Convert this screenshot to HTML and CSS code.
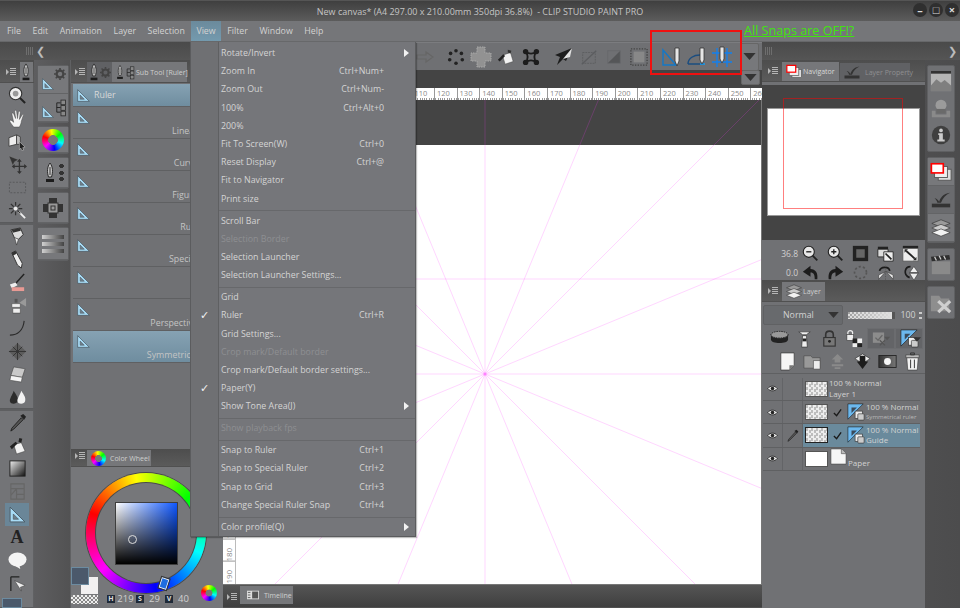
FILE: index.html
```html
<!DOCTYPE html>
<html lang="en">
<head>
    <meta charset="UTF-8">
    <title>New canvas - CLIP STUDIO PAINT PRO</title>
    <link rel="stylesheet" href="styles.css">
</head>
<body>
<svg class="sprite" xmlns="http://www.w3.org/2000/svg">
    <symbol id="ham" viewBox="0 0 12 10"><path d="M1 2v6l3-3z" fill="#b5b5b5"/><path d="M5 1.5h6M5 3.5h6M5 5.5h6M5 7.5h6" stroke="#b5b5b5"/></symbol>
    <symbol id="ruler" viewBox="0 0 18 18"><path d="M2 2l14 14H2z" fill="#a8dcf6" stroke="#46535c" stroke-width=".8"/><path d="M5 8.5l5 5H5z" fill="#6f7f8a" stroke="#46535c" stroke-width=".6"/></symbol>
    <symbol id="pen" viewBox="0 0 14 22"><path d="M7 1c3 4 3 9 1.5 14h-3C4 10 4 5 7 1z" fill="#c9c9c9" stroke="#2a2a2a"/><path d="M7 5v8" stroke="#333"/><path d="M3 17h8v3H3z" fill="#1c1c1c"/></symbol>
    <symbol id="mag" viewBox="0 0 20 20"><circle cx="8" cy="8" r="6.5" fill="#eee" stroke="#333" stroke-width="1.2"/><circle cx="8" cy="8" r="3" fill="#999"/><path d="M12.5 12.5l5.5 5.5" stroke="#222" stroke-width="2.2"/></symbol>
    <symbol id="hand" viewBox="0 0 20 20"><path d="M6 19c-2-3-5-6-4-7s3 1 4 2L4 5c0-1 1-1 2 0l2 5-1-8c0-1 2-1 2 0l1 8 1-7c0-1 2-1 2 0l-1 8 3-5c1-1 2 0 1 1l-2 6c0 2-1 4-2 6z" fill="#f4f4f4" stroke="#444" stroke-width=".5"/></symbol>
    <symbol id="cube" viewBox="0 0 20 20"><path d="M1 6l8-3v10l-8 2z" fill="#eee" stroke="#444"/><path d="M9 3l4 2v8l-4 0z" fill="#bbb" stroke="#444"/><path d="M12 10l6 6-2.5 .5 1 2.5-2 .5-1-2.5-1.5 1.5z" fill="#222" stroke="#ddd" stroke-width=".5"/></symbol>
    <symbol id="move" viewBox="0 0 20 20"><path d="M1 1l10 4-4 2-2 4z" fill="#333" stroke="#888" stroke-width=".4"/><path d="M12 6v13M6 12h13" stroke="#333" stroke-width="1.4"/><path d="M12 4l2.5 3h-5zM12 20l2.5-3h-5zM4 12l3-2.5v5zM20 12l-3-2.5v5z" fill="#333"/></symbol>
    <symbol id="dash" viewBox="0 0 20 20"><rect x="1.5" y="4.5" width="17" height="11" fill="none" stroke="#595a5c" stroke-dasharray="2 1.5"/></symbol>
    <symbol id="wand" viewBox="0 0 20 20"><path d="M11 11l7 7" stroke="#eee" stroke-width="2"/><path d="M8 1v4M8 11v4M1 8h4M11 8h4M3 3l3 3M10 10l3 3M13 3l-3 3M3 13l3-3" stroke="#333" stroke-width="1.3"/><circle cx="8" cy="8" r="2" fill="#eee"/></symbol>
    <symbol id="gpen" viewBox="0 0 20 20"><path d="M3 3l10-2 3 7-5 5-4-1z" fill="#ddd" stroke="#333"/><path d="M4 3l9-2 .5 3-8.5 2z" fill="#333"/><path d="M7 11l4 2-2 6z" fill="#eee" stroke="#333" stroke-width=".6"/></symbol>
    <symbol id="pencil" viewBox="0 0 20 20"><path d="M4 3l4-2 7 13-1 5-4-3z" fill="#eee" stroke="#333"/><path d="M4 3l4-2 1 3-4 2z" fill="#333"/></symbol>
    <symbol id="brush" viewBox="0 0 20 20"><path d="M8 11L17 1" stroke="#222" stroke-width="1.5"/><path d="M2 12l6-2 2 3-6 3z" fill="#eee"/><path d="M4 15h13v4H4z" fill="#e89a94"/></symbol>
    <symbol id="air" viewBox="0 0 20 20"><path d="M4 8h9v4H4zM5 13h8v5H5z" fill="#eee" stroke="#444" stroke-width=".6"/><path d="M12 7l7-5v9z" fill="#999"/><path d="M7 3h3v4H7z" fill="#555"/></symbol>
    <symbol id="curve" viewBox="0 0 20 20"><path d="M2 17c8 0 14-5 15-15" fill="none" stroke="#2b2b2b" stroke-width="1.2"/></symbol>
    <symbol id="deco" viewBox="0 0 20 20"><path d="M10 1l9 9-9 9-9-9z" fill="#5c5c5c"/><path d="M10 1v18M1 10h18M5 5l10 10M15 5L5 15" stroke="#333"/></symbol>
    <symbol id="eraser" viewBox="0 0 20 20"><path d="M6 2l12 2-3 9-12-2z" fill="#c9c9c9" stroke="#444" stroke-width=".6"/><path d="M3 11l12 2-1 5-12-2z" fill="#f4f4f4" stroke="#444" stroke-width=".6"/></symbol>
    <symbol id="blend" viewBox="0 0 20 20"><path d="M6 3c3 5 5 7 4 11-.5 3-7 4-8 0-.5-3 3-7 4-11z" fill="#2c2c2c"/><path d="M14 3c3 5 5 7 4 11-.5 3-7 4-8 0-.5-3 3-7 4-11z" fill="#f2f2f2"/></symbol>
    <symbol id="drop" viewBox="0 0 20 20"><path d="M4 16l10-11 2 2-10 10-3 2z" fill="#555" stroke="#222"/><path d="M13 3l3-2 3 3-2 3z" fill="#222"/></symbol>
    <symbol id="fill" viewBox="0 0 20 20"><path d="M6 9l8-2 4 9-9 3z" fill="#f2f2f2" stroke="#444" stroke-width=".6"/><path d="M2 11l6-5 2 2-6 6z" fill="#222"/><path d="M12 2l3 1-1 4-3-1z" fill="#222"/></symbol>
    <symbol id="grad" viewBox="0 0 20 20"><defs><linearGradient id="g1" x1="0" y1="0" x2="1" y2="1"><stop offset="0" stop-color="#eee"/><stop offset="1" stop-color="#111"/></linearGradient></defs><rect x="2" y="2" width="16" height="16" fill="url(#g1)" stroke="#222"/></symbol>
    <symbol id="frame" viewBox="0 0 20 20"><path d="M3 2h14v16H3zM3 7h14M9 7l-6 7M9 7v11M9 13h8" fill="none" stroke="#666" stroke-width="1.2"/></symbol>
    <symbol id="balloon" viewBox="0 0 20 20"><ellipse cx="10" cy="9" rx="9.5" ry="7.5" fill="#f4f4f4"/><path d="M12 15l1 4-5-3z" fill="#f4f4f4"/></symbol>
    <symbol id="corr" viewBox="0 0 20 20"><path d="M3 3h9M3 3v15" stroke="#222" stroke-width="1.3"/><path d="M7 7l11 5-5 2 1 4z" fill="#eee" stroke="#333" stroke-width=".5"/></symbol>
    <symbol id="gear" viewBox="0 0 16 16"><circle cx="8" cy="8" r="4.5" fill="none" stroke="#444" stroke-width="3"/><path d="M8 0v16M0 8h16M2.3 2.3l11.400 11.400M13.700 2.3L2.3 13.700" stroke="#444" stroke-width="2.2" stroke-dasharray="2.5 11"/></symbol>
    <symbol id="tree" viewBox="0 0 14 22"><path d="M3 6h4M3 6v10M3 11h4M3 16h4" fill="none" stroke="#222"/><rect x="7.5" y="3" width="5" height="5" fill="#888" stroke="#222" stroke-width=".8"/><rect x="7.5" y="9" width="5" height="5" fill="#888" stroke="#222" stroke-width=".8"/><rect x="7.5" y="15" width="5" height="5" fill="#888" stroke="#222" stroke-width=".8"/></symbol>
    <symbol id="pal" viewBox="0 0 24 24"><path d="M8 2h8v5H8zM2 8h5v8H2zM17 8h5v8h-5zM8 17h8v5H8z" fill="#333"/><rect x="7" y="7" width="10" height="10" fill="#999" stroke="#333"/><rect x="10" y="10" width="4" height="4" fill="none" stroke="#333"/></symbol>
    <symbol id="sliders" viewBox="0 0 24 24"><defs><linearGradient id="g2"><stop offset="0" stop-color="#d0d0d0"/><stop offset="1" stop-color="#444"/></linearGradient></defs><path d="M1 3h22v4H1zM1 10h22v4H1zM1 17h22v4H1z" fill="url(#g2)"/></symbol>
    <symbol id="arrow" viewBox="0 0 18 14"><path d="M1 5h9V2l7 5-7 5V9H1z" fill="none" stroke="#666" stroke-width="1.2"/></symbol>
    <symbol id="dots" viewBox="0 0 20 20"><g fill="#222"><circle cx="10" cy="3" r="2"/><circle cx="16" cy="6" r="2"/><circle cx="17" cy="13" r="2"/><circle cx="10" cy="17" r="2"/><circle cx="3" cy="13" r="2"/><circle cx="4" cy="6" r="2"/></g></symbol>
    <symbol id="selcross" viewBox="0 0 22 22"><path d="M7 1h8v6h6v8h-6v6H7v-6H1V7h6z" fill="#929292" stroke="#aaa" stroke-dasharray="1.5 1"/></symbol>
    <symbol id="bucket" viewBox="0 0 20 20"><path d="M6 8l9-3 3 10-9 3z" fill="#f2f2f2" stroke="#444" stroke-width=".6"/><path d="M1 13l6-6 2 2-6 6z" fill="#222"/><path d="M12 2l4 1-1 3-3-1z" fill="#333"/></symbol>
    <symbol id="trans" viewBox="0 0 20 20"><path d="M4 4C8 7 12 7 16 4 13 8 13 12 16 16 12 13 8 13 4 16 7 12 7 8 4 4z" fill="none" stroke="#1c1c1c" stroke-width="2"/><g fill="#1c1c1c"><circle cx="4" cy="4" r="3"/><circle cx="16" cy="4" r="3"/><circle cx="4" cy="16" r="3"/><circle cx="16" cy="16" r="3"/></g></symbol>
    <symbol id="plane" viewBox="0 0 22 22"><path d="M19 2L2 9l5 2-3 8 6-6 3 2z" fill="#1c1c1c"/><path d="M19 2L10 13l7-2z" fill="#e0e0e0"/></symbol>
    <symbol id="fade1" viewBox="0 0 20 20"><path d="M3 5h14v12H3z" fill="none" stroke="#5c5d60" stroke-dasharray="2 1"/><path d="M2 18L18 3" stroke="#5c5d60" stroke-width="1.5"/></symbol>
    <symbol id="fade2" viewBox="0 0 20 20"><path d="M17 3v14H3z" fill="#555658"/><path d="M3 3h14v14H3z" fill="none" stroke="#68696c"/></symbol>
    <symbol id="griddot" viewBox="0 0 20 20"><rect x="4" y="4" width="12" height="12" fill="#888"/><rect x="1" y="1" width="18" height="18" fill="none" stroke="#444" stroke-dasharray="1.5 1.5" stroke-width="1.5"/></symbol>
    <symbol id="snap1" viewBox="0 0 22 22"><path d="M2 4l13 15H2z" fill="none" stroke="#1378c8" stroke-width="1.4"/><path d="M14 2h4v13l-2 5-2-5z" fill="#e6e6e6" stroke="#333" stroke-width=".8"/></symbol>
    <symbol id="snap2" viewBox="0 0 22 22"><path d="M2 18c0-6 6-9 12-9M2 18h16" fill="none" stroke="#1b4d80" stroke-width="1.5"/><path d="M14 18h5" stroke="#1b9cf0" stroke-width="1.5"/><path d="M14 2h4v12l-2 4-2-4z" fill="#e6e6e6" stroke="#333" stroke-width=".8"/></symbol>
    <symbol id="snap3" viewBox="0 0 22 22"><path d="M1 7h20M1 16h20M6 2v19M16 2v19" stroke="#1280f0" stroke-width="1.3"/><path d="M9 1h4v12l-2 4-2-4z" fill="#e6e6e6" stroke="#333" stroke-width=".8"/></symbol>
    <symbol id="down" viewBox="0 0 14 8"><path d="M0 0h14L7 8z" fill="#333"/></symbol>
    <symbol id="nav" viewBox="0 0 24 22"><rect x="9" y="8" width="14" height="12" fill="#ddd" stroke="#555"/><rect x="5" y="5" width="14" height="12" fill="#eee" stroke="#555"/><rect x="1.5" y="2" width="13" height="10" fill="#fff" stroke="#f00" stroke-width="1.8"/></symbol>
    <symbol id="layerprop" viewBox="0 0 24 20"><path d="M2 14h20v4H2z" fill="#333"/><path d="M8 13c0-2-2-4-3-5 2 0 4 2 5 4 1-4 4-9 12-10-5 2-8 6-10 11z" fill="#333"/></symbol>
    <symbol id="stack" viewBox="0 0 24 20"><path d="M12 1l10 4-10 4L2 5z" fill="#9a9a9a" stroke="#333" stroke-width=".7"/><path d="M12 6l10 4-10 4L2 10z" fill="#ccc" stroke="#333" stroke-width=".7"/><path d="M12 11l10 4-10 4-10-4z" fill="#f2f2f2" stroke="#333" stroke-width=".7"/></symbol>
    <symbol id="pict" viewBox="0 0 24 24"><rect x="1" y="1" width="22" height="22" fill="#b5b5b5"/><path d="M1 1h22v3H1z" fill="#333"/><path d="M1 17l6-7 5 4 4-3 7 6v6H1z" fill="#7f7f7f"/></symbol>
    <symbol id="house" viewBox="0 0 24 24"><circle cx="12" cy="9" r="6" fill="#9b9b9b"/><path d="M2 15h4v4h12v-4h4v7H2z" fill="#8a8a8a"/><path d="M7 13h10v5H7z" fill="#6a6a6a"/></symbol>
    <symbol id="info" viewBox="0 0 24 24"><circle cx="12" cy="12" r="10" fill="#3f3f3f"/><circle cx="12" cy="7" r="2" fill="#ccc"/><path d="M9 10h5v7h2v2H8v-2h2v-5H9z" fill="#ccc"/></symbol>
    <symbol id="clap" viewBox="0 0 24 24"><path d="M2 8h20v14H2z" fill="#8a8a8a"/><path d="M1 3l20-2 1 5-20 2z" fill="#2e2e2e"/><path d="M5 3l2 4M10 2l2 4M15 2l2 4" stroke="#ccc" stroke-width="1.4"/></symbol>
    <symbol id="material" viewBox="0 0 24 24"><path d="M1 4h9l2 3h9v14H1z" fill="#8e8e8e"/><path d="M9 10l13 12M22 10L9 22" stroke="#cfcfcf" stroke-width="3.5"/></symbol>
    <symbol id="zout" viewBox="0 0 20 20"><circle cx="8" cy="8" r="6.5" fill="#e8e8e8" stroke="#222" stroke-width="1.3"/><path d="M5 8h6" stroke="#222" stroke-width="1.6"/><path d="M12.5 12.5l5.5 5.5" stroke="#222" stroke-width="2.2"/></symbol>
    <symbol id="zin" viewBox="0 0 20 20"><circle cx="8" cy="8" r="6.5" fill="#e8e8e8" stroke="#222" stroke-width="1.3"/><path d="M5 8h6M8 5v6" stroke="#222" stroke-width="1.6"/><path d="M12.5 12.5l5.5 5.5" stroke="#222" stroke-width="2.2"/></symbol>
    <symbol id="full" viewBox="0 0 20 20"><rect x="1" y="1" width="18" height="18" fill="#222"/><rect x="5" y="5" width="10" height="10" fill="#666"/></symbol>
    <symbol id="fitnav" viewBox="0 0 20 20"><path d="M1 2h12v3H1z" fill="#222"/><path d="M1 5h12v9H1z" fill="#ddd" stroke="#222"/><path d="M8 8h11v11H8z" fill="#eee" stroke="#222"/><path d="M10 10l7 7" stroke="#222" stroke-width="2"/></symbol>
    <symbol id="fitscr" viewBox="0 0 20 20"><path d="M1 1h18v3H1z" fill="#222"/><path d="M1 4h18v15H1z" fill="#eee" stroke="#555"/><path d="M5 7l10 9" stroke="#222" stroke-width="2.2"/><path d="M3 5h4L3 9zM17 18h-4l4-4z" fill="#222"/></symbol>
    <symbol id="rotl" viewBox="0 0 20 20"><path d="M18 18c1-7-2-12-8-12V2L1 9l9 6v-5c4 0 5 3 5 8z" fill="#1c1c1c"/></symbol>
    <symbol id="rotr" viewBox="0 0 20 20"><path d="M2 18C1 11 4 6 10 6V2l9 7-9 6v-5c-4 0-5 3-5 8z" fill="#1c1c1c"/></symbol>
    <symbol id="reset" viewBox="0 0 20 20"><circle cx="10" cy="10" r="7" fill="none" stroke="#555" stroke-width="2" stroke-dasharray="2.5 2.5"/></symbol>
    <symbol id="fliph" viewBox="0 0 20 20"><path d="M3 8C4 3 14 2 15 8" fill="none" stroke="#1c1c1c" stroke-width="2"/><path d="M10 9L2 13v5zM11 9l8 4v5z" fill="#eee" stroke="#222" stroke-width=".6"/><path d="M10 2v18" stroke="#555" stroke-dasharray="1.5 1.5"/></symbol>
    <symbol id="flipv" viewBox="0 0 20 20"><path d="M10 3C3 3 1 13 9 16" fill="none" stroke="#1c1c1c" stroke-width="2"/><path d="M9 10l10 0-5-7zM9 11h10l-5 8z" fill="#eee" stroke="#222" stroke-width=".6"/></symbol>
    <symbol id="clip" viewBox="0 0 20 20"><ellipse cx="10" cy="6" rx="9" ry="3.5" fill="#999" stroke="#222" stroke-dasharray="1.5 1"/><path d="M1 6v5c0 5 18 5 18 0V6c0 5-18 5-18 0z" fill="#222"/></symbol>
    <symbol id="tower" viewBox="0 0 20 20"><path d="M4 3h12l-4 3H8zM8 7h4l1 12H7z" fill="#eee" stroke="#222" stroke-width=".6"/><path d="M8 10h4v3H8z" fill="#222"/></symbol>
    <symbol id="lock" viewBox="0 0 20 20"><path d="M6 9V6c0-5 8-5 8 0v3" fill="none" stroke="#333" stroke-width="1.7"/><rect x="4" y="9" width="12" height="9" fill="#777" stroke="#333" stroke-width="1.2"/><circle cx="10" cy="13" r="1.5" fill="#222"/></symbol>
    <symbol id="lockalpha" viewBox="0 0 20 20"><path d="M3 6V4c0-3 5-3 5 0v2" fill="none" stroke="#eee" stroke-width="1.3"/><rect x="2" y="6" width="7" height="6" fill="#eee" stroke="#333" stroke-width=".6"/><rect x="8" y="10" width="5" height="5" fill="#222"/><rect x="13" y="10" width="5" height="5" fill="#eee"/><rect x="8" y="15" width="5" height="4" fill="#eee"/><rect x="13" y="15" width="5" height="4" fill="#222"/></symbol>
    <symbol id="refer" viewBox="0 0 22 18"><path d="M1 2h13v12H1z" fill="#8c8c8c"/><path d="M4 8l3 3 5-6" fill="none" stroke="#666" stroke-width="1.5"/><path d="M9 11l6 6M15 11l-6 6" stroke="#555" stroke-width="1.5"/><path d="M14 7h7l-3.5 4z" fill="#555"/></symbol>
    <symbol id="rulerlayer" viewBox="0 0 20 20"><path d="M1 1h17L1 18z" fill="#6cb8ee" stroke="#111" stroke-width=".6"/><path d="M5 5h6l-6 6z" fill="#3a4a5a"/><rect x="9" y="9" width="8" height="8" fill="#eee" stroke="#333" stroke-width=".7"/><rect x="12" y="12" width="7" height="7" rx="1" fill="#ccc" stroke="#333" stroke-width=".7"/></symbol>
    <symbol id="newlayer" viewBox="0 0 20 20"><path d="M3 1h14v13l-5 5H3z" fill="#f6f6f6" stroke="#333" stroke-width=".7"/><path d="M12 19v-5h5z" fill="#777"/></symbol>
    <symbol id="folder" viewBox="0 0 20 20"><path d="M1 4h7l2 2h8v11H1z" fill="#999" stroke="#444" stroke-width=".6"/><path d="M11 9h7v9h-7z" fill="#eee" stroke="#444" stroke-width=".6"/></symbol>
    <symbol id="uplayer" viewBox="0 0 20 20"><path d="M10 2l6 6h-3v3H7V8H4zM4 13h12v2H4zM7 16h6v2H7z" fill="#8a8a8a"/></symbol>
    <symbol id="merge" viewBox="0 0 20 20"><path d="M2 7l8-5 8 5-8 5z" fill="#eee" stroke="#222" stroke-width=".6"/><path d="M7 4h6v6h3l-6 8-6-8h3z" fill="#1c1c1c"/></symbol>
    <symbol id="mask" viewBox="0 0 22 16"><defs><linearGradient id="g3"><stop offset="0" stop-color="#333"/><stop offset="1" stop-color="#777"/></linearGradient></defs><rect x="1" y="1" width="20" height="14" fill="url(#g3)" stroke="#222"/><circle cx="11" cy="8" r="4" fill="#f6f6f6"/></symbol>
    <symbol id="trash" viewBox="0 0 20 20"><path d="M4 6h12l-1 13H5z" fill="#f2f2f2" stroke="#333" stroke-width=".6"/><path d="M3 3h14v3H3z" fill="#bbb" stroke="#333" stroke-width=".6"/><path d="M8 1h4v2H8zM8 8v9M12 8v9" stroke="#333" fill="none"/></symbol>
    <symbol id="eye" viewBox="0 0 14 8"><path d="M1 4c3-4 9-4 12 0-3 4-9 4-12 0z" fill="#eee" stroke="#222"/><circle cx="7" cy="4" r="2.3" fill="#222"/></symbol>
    <symbol id="check" viewBox="0 0 10 10"><path d="M1 5.5l3 3 5-7" fill="none" stroke="#1a1a1a" stroke-width="1.5"/></symbol>
    <symbol id="paper" viewBox="0 0 18 18"><path d="M1 1h11l5 5v11H1z" fill="#f6f6f6" stroke="#444" stroke-width=".6"/><path d="M12 1v5h5" fill="#bbb" stroke="#444" stroke-width=".6"/></symbol>
    <symbol id="film" viewBox="0 0 14 10"><rect width="14" height="10" fill="#ddd"/><rect x="6" y="1" width="7" height="8" fill="#555"/><path d="M1 2h3M1 5h3M1 8h3" stroke="#555"/></symbol>
</svg>

<div class="app">
    <header class="titlebar">
        <span></span>
        <span class="title">New canvas* (A4 297.00 x 210.00mm 350dpi 36.8%)  - CLIP STUDIO PAINT PRO</span>
        <div class="winbtns">
            <span class="winbtn">&#8211;</span>
            <span class="winbtn">&#9633;</span>
            <span class="winbtn">&#215;</span>
        </div>
    </header>

    <nav class="menubar">
        <span class="menuitem">File</span>
        <span class="menuitem">Edit</span>
        <span class="menuitem">Animation</span>
        <span class="menuitem">Layer</span>
        <span class="menuitem">Selection</span>
        <span class="menuitem open">View</span>
        <span class="menuitem">Filter</span>
        <span class="menuitem">Window</span>
        <span class="menuitem">Help</span>
    </nav>

    <div class="workspace">
        <!-- left docks -->
        <section class="side-left">
            <div class="strip"><span class="grip grip-left"></span><span class="chev">&#10094;</span></div>
            <div class="left-body">
                <div class="tools">
                    <div class="tabbar"><svg class="hamicon"><use href="#ham"/></svg><span class="tab tab-pen"><svg class="tabpen"><use href="#pen"/></svg></span></div>
                    <div class="toolgroup group-a">
                        <div class="tool"><svg><use href="#mag"/></svg></div>
                        <div class="tool"><svg><use href="#hand"/></svg></div>
                        <div class="tool"><svg><use href="#cube"/></svg></div>
                        <div class="tool"><svg><use href="#move"/></svg></div>
                        <div class="tool"><svg><use href="#dash"/></svg></div>
                        <div class="tool"><svg><use href="#wand"/></svg></div>
                    </div>
                    <div class="toolgroup group-b">
                        <div class="tool"><svg><use href="#gpen"/></svg></div>
                        <div class="tool"><svg><use href="#pencil"/></svg></div>
                        <div class="tool"><svg><use href="#brush"/></svg></div>
                        <div class="tool"><svg><use href="#air"/></svg></div>
                        <div class="tool"><svg><use href="#curve"/></svg></div>
                        <div class="tool"><svg><use href="#deco"/></svg></div>
                        <div class="tool"><svg><use href="#eraser"/></svg></div>
                        <div class="tool"><svg><use href="#blend"/></svg></div>
                    </div>
                    <div class="toolgroup group-c">
                        <div class="tool"><svg><use href="#drop"/></svg></div>
                        <div class="tool"><svg><use href="#fill"/></svg></div>
                        <div class="tool"><svg><use href="#grad"/></svg></div>
                        <div class="tool"><svg><use href="#frame"/></svg></div>
                        <div class="tool active"><svg><use href="#ruler"/></svg></div>
                        <div class="tool tool-text">A</div>
                        <div class="tool"><svg><use href="#balloon"/></svg></div>
                        <div class="tool"><svg><use href="#corr"/></svg></div>
                    </div>
                    <div class="fgmini"></div>
                </div>

                <div class="subtabs">
                    <div class="dockgroup">
                        <div class="docktile tile-tall"><svg class="tile-a"><use href="#ruler"/></svg><svg class="tile-gear"><use href="#gear"/></svg></div>
                        <div class="docktile tile-tall"><svg class="tile-a"><use href="#ruler"/></svg><svg class="tile-tree"><use href="#tree"/></svg></div>
                    </div>
                    <div class="dockgroup">
                        <div class="docktile tile-color"><span class="minihue"></span></div>
                    </div>
                    <div class="dockgroup">
                        <div class="docktile tile-pen"><svg class="tile-penicon"><use href="#pen"/></svg><span class="penDots"></span></div>
                    </div>
                    <div class="dockgroup">
                        <div class="docktile tile-pen"><svg class="tile-big"><use href="#pal"/></svg></div>
                    </div>
                    <div class="dockgroup">
                        <div class="docktile tile-slider"><svg class="tile-big"><use href="#sliders"/></svg></div>
                    </div>
                </div>

                <div class="left-panels">
                    <div class="tabbar">
                        <svg class="hamicon"><use href="#ham"/></svg>
                        <span class="tab tab-off tab-tool"><svg class="tabpen"><use href="#pen"/></svg><svg class="tabgear"><use href="#gear"/></svg></span>
                        <span class="tab tab-on tab-sub"><svg class="tabpen"><use href="#pen"/></svg><svg class="tabpen"><use href="#tree"/></svg>Sub Tool [Ruler]</span>
                    </div>
                    <div class="sublist">
                        <div class="subrow first selected"><svg class="subicon"><use href="#ruler"/></svg>Ruler</div>
                        <div class="subrow"><svg class="subicon"><use href="#ruler"/></svg><span class="sublabel">Linear ruler</span></div>
                        <div class="subrow"><svg class="subicon"><use href="#ruler"/></svg><span class="sublabel">Curve ruler</span></div>
                        <div class="subrow"><svg class="subicon"><use href="#ruler"/></svg><span class="sublabel">Figure ruler</span></div>
                        <div class="subrow"><svg class="subicon"><use href="#ruler"/></svg><span class="sublabel">Ruler pen</span></div>
                        <div class="subrow"><svg class="subicon"><use href="#ruler"/></svg><span class="sublabel">Special ruler</span></div>
                        <div class="subrow"><svg class="subicon"><use href="#ruler"/></svg><span class="sublabel">Guide</span></div>
                        <div class="subrow"><svg class="subicon"><use href="#ruler"/></svg><span class="sublabel">Perspective ruler</span></div>
                        <div class="subrow selected"><svg class="subicon"><use href="#ruler"/></svg><span class="sublabel">Symmetrical ruler</span></div>
                    </div>
                    <div class="tabbar tabbar-color">
                        <svg class="hamicon"><use href="#ham"/></svg>
                        <span class="tab tab-on tab-wheel"><span class="minihue small"></span>Color Wheel</span>
                    </div>
                    <div class="colorpanel">
                        <div class="wheel">
                            <div class="wheelhole"><div class="svsquare"><span class="svcursor"></span></div></div>
                            <span class="huehandle"></span>
                        </div>
                        <div class="swatch-bg"></div>
                        <div class="swatch-fg"></div>
                        <div class="swatch-clear"></div>
                        <div class="hsvrow">
                            <span class="hsvtag">H</span><span class="hsvval">219</span>
                            <span class="hsvtag">S</span><span class="hsvval">29</span>
                            <span class="hsvtag">V</span><span class="hsvval">40</span>
                        </div>
                        <span class="minihue playhue"></span>
                    </div>
                </div>
            </div>
        </section>

        <!-- canvas -->
        <main class="center">
            <div class="toolbar">
                <span class="cmd"><svg><use href="#arrow"/></svg></span>
                <span class="cmdsep"></span>
                <span class="cmd"><svg><use href="#dots"/></svg></span>
                <span class="cmd"><svg class="cmd-l"><use href="#selcross"/></svg></span>
                <span class="cmd"><svg><use href="#bucket"/></svg></span>
                <span class="cmd"><svg><use href="#trans"/></svg></span>
                <span class="cmdsep wide"></span>
                <span class="cmd"><svg class="cmd-l"><use href="#plane"/></svg></span>
                <span class="cmd"><svg><use href="#fade1"/></svg></span>
                <span class="cmd"><svg><use href="#fade2"/></svg></span>
                <span class="cmd"><svg><use href="#griddot"/></svg></span>
                <span class="cmdsep wide"></span>
                <span class="cmd"><svg class="cmd-l"><use href="#snap1"/></svg></span>
                <span class="cmd"><svg class="cmd-l"><use href="#snap2"/></svg></span>
                <span class="cmd"><svg class="cmd-l"><use href="#snap3"/></svg></span>
                <div class="cmdmore">
                    <span class="morebtn big"><svg><use href="#down"/></svg></span>
                </div>
            </div>
            <div class="darkgap"><span class="morebtn small"><svg><use href="#down"/></svg></span></div>
            <div class="hruler">
                <span>110</span><span>120</span><span>130</span><span>140</span><span>150</span><span>160</span><span>170</span><span>180</span>
                <span>190</span><span>200</span><span>210</span><span>220</span><span>230</span><span>240</span><span>250</span><span>260</span>
            </div>
            <div class="canvasrow">
                <div class="vruler"><span>170</span><span>180</span><span>190</span></div>
                <div class="canvasview">
                    <div class="paper"></div>
                    <svg class="guides" viewBox="0 0 525 484">
                        <path class="guide" d="M-50 179H600"/>
                        <g class="guide" transform="translate(249 274)">
                            <path d="M0 -800V800"/><path d="M-800 0H800"/>
                            <path d="M-800 -800L800 800"/><path d="M-800 800L800 -800"/>
                            <path d="M-331 -800L331 800"/><path d="M-331 800L331 -800"/>
                            <path d="M-800 -331L800 331"/><path d="M-800 331L800 -331"/>
                        </g>
                        <circle class="guidedot" cx="249" cy="274" r="1.5"/>
                    </svg>
                </div>
            </div>
            <div class="tabbar timeline">
                <svg class="hamicon"><use href="#ham"/></svg>
                <span class="tab tab-on tab-time"><svg class="filmicon"><use href="#film"/></svg>Timeline</span>
            </div>
        </main>

        <!-- right docks -->
        <section class="side-right">
            <div class="strip strip-right"><span class="grip"></span><span class="chev">&#10095;</span></div>
            <div class="right-body">
                <div class="right-panels">
                    <div class="tabbar">
                        <svg class="hamicon"><use href="#ham"/></svg>
                        <span class="tab tab-on tab-nav"><svg class="tabicon"><use href="#nav"/></svg>Navigator</span>
                        <span class="tab tab-off tab-prop"><svg class="tabicon"><use href="#layerprop"/></svg>Layer Property</span>
                    </div>
                    <div class="navview">
                        <div class="navpaper"></div>
                        <div class="navframe"></div>
                    </div>
                    <div class="navcontrols">
                        <div class="navrow">
                            <span class="navval">36.8</span>
                            <svg class="navbtn"><use href="#zout"/></svg>
                            <svg class="navbtn"><use href="#zin"/></svg>
                            <svg class="navbtn"><use href="#full"/></svg>
                            <svg class="navbtn"><use href="#fitnav"/></svg>
                            <svg class="navbtn"><use href="#fitscr"/></svg>
                        </div>
                        <div class="navrow">
                            <span class="navval">0.0</span>
                            <svg class="navbtn"><use href="#rotl"/></svg>
                            <svg class="navbtn"><use href="#rotr"/></svg>
                            <svg class="navbtn"><use href="#reset"/></svg>
                            <svg class="navbtn"><use href="#fliph"/></svg>
                            <svg class="navbtn"><use href="#flipv"/></svg>
                        </div>
                    </div>
                    <div class="tabbar">
                        <svg class="hamicon"><use href="#ham"/></svg>
                        <span class="tab tab-on tab-layer"><svg class="tabicon"><use href="#stack"/></svg>Layer</span>
                    </div>
                    <div class="blendrow">
                        <div class="blendselect"><span>Normal</span><svg class="blendarrow"><use href="#down"/></svg></div>
                        <div class="opacitybar"></div>
                        <span class="opacityval">100</span>
                        <span class="spin"></span>
                    </div>
                    <div class="layericons first-icons">
                        <span class="licon"><svg><use href="#clip"/></svg></span>
                        <span class="licon"><svg><use href="#tower"/></svg></span>
                        <span class="licon"><svg><use href="#lock"/></svg></span>
                        <span class="licon"><svg><use href="#lockalpha"/></svg></span>
                        <span class="licon boxed"><svg><use href="#refer"/></svg></span>
                        <span class="licon boxed"><svg><use href="#rulerlayer"/></svg><svg class="boxarrow"><use href="#down"/></svg></span>
                    </div>
                    <div class="layericons">
                        <span class="licon"><svg><use href="#newlayer"/></svg></span>
                        <span class="licon"><svg><use href="#folder"/></svg></span>
                        <span class="licon"><svg><use href="#uplayer"/></svg></span>
                        <span class="licon"><svg><use href="#merge"/></svg></span>
                        <span class="licon"><svg><use href="#mask"/></svg></span>
                        <span class="licon"><svg><use href="#trash"/></svg></span>
                    </div>
                    <div class="layerlist">
                        <div class="layer">
                            <span class="lcol"><svg class="eye"><use href="#eye"/></svg></span>
                            <span class="lcol"></span>
                            <div class="lmain">
                                <span class="thumb"></span>
                                <div class="ltext"><span>100 % Normal</span><span>Layer 1</span></div>
                            </div>
                        </div>
                        <div class="layer">
                            <span class="lcol"><svg class="eye"><use href="#eye"/></svg></span>
                            <span class="lcol"></span>
                            <div class="lmain">
                                <span class="thumb"></span>
                                <svg class="lcheck"><use href="#check"/></svg>
                                <svg class="lruler"><use href="#rulerlayer"/></svg>
                                <div class="ltext"><span>100 % Normal</span><span class="tiny">Symmetrical ruler</span></div>
                            </div>
                        </div>
                        <div class="layer">
                            <span class="lcol"><svg class="eye"><use href="#eye"/></svg></span>
                            <span class="lcol"><svg class="lpen"><use href="#drop"/></svg></span>
                            <div class="lmain selected">
                                <span class="thumb thumb-on"></span>
                                <svg class="lcheck"><use href="#check"/></svg>
                                <svg class="lruler"><use href="#rulerlayer"/></svg>
                                <div class="ltext"><span>100 % Normal</span><span>Guide</span></div>
                            </div>
                        </div>
                        <div class="layer">
                            <span class="lcol"><svg class="eye"><use href="#eye"/></svg></span>
                            <span class="lcol"></span>
                            <div class="lmain">
                                <span class="thumb thumb-white"></span>
                                <svg class="lpaper"><use href="#paper"/></svg>
                                <div class="ltext ltext-low"><span>Paper</span></div>
                            </div>
                        </div>
                    </div>
                </div>
                <div class="right-tabs">
                    <div class="dockgroup rt-a">
                        <svg class="rticon"><use href="#pict"/></svg>
                        <svg class="rticon"><use href="#house"/></svg>
                        <svg class="rticon"><use href="#info"/></svg>
                    </div>
                    <div class="dockgroup rt-b">
                        <div class="docktile"><svg class="rticon"><use href="#nav"/></svg></div>
                        <div class="docktile dim"><svg class="rticon"><use href="#layerprop"/></svg></div>
                        <div class="docktile"><svg class="rticon"><use href="#stack"/></svg></div>
                    </div>
                    <div class="dockgroup rt-c"><svg class="rticon"><use href="#clap"/></svg></div>
                    <div class="dockgroup rt-c"><svg class="rticon"><use href="#material"/></svg></div>
                </div>
            </div>
        </section>
    </div>

    <!-- open View menu -->
    <div class="viewmenu">
        <div class="mrow"><span class="mlabel">Rotate/Invert</span><span class="marrow"></span></div>
        <div class="mrow"><span class="mlabel">Zoom In</span><span class="mkey">Ctrl+Num+</span></div>
        <div class="mrow"><span class="mlabel">Zoom Out</span><span class="mkey">Ctrl+Num-</span></div>
        <div class="mrow"><span class="mlabel">100%</span><span class="mkey">Ctrl+Alt+0</span></div>
        <div class="mrow"><span class="mlabel">200%</span></div>
        <div class="mrow"><span class="mlabel">Fit To Screen(W)</span><span class="mkey">Ctrl+0</span></div>
        <div class="mrow"><span class="mlabel">Reset Display</span><span class="mkey">Ctrl+@</span></div>
        <div class="mrow"><span class="mlabel">Fit to Navigator</span></div>
        <div class="mrow"><span class="mlabel">Print size</span></div>
        <div class="msep"></div>
        <div class="mrow"><span class="mlabel">Scroll Bar</span></div>
        <div class="mrow off"><span class="mlabel">Selection Border</span></div>
        <div class="mrow"><span class="mlabel">Selection Launcher</span></div>
        <div class="mrow"><span class="mlabel">Selection Launcher Settings...</span></div>
        <div class="msep"></div>
        <div class="mrow"><span class="mlabel">Grid</span></div>
        <div class="mrow checked"><span class="mlabel">Ruler</span><span class="mkey">Ctrl+R</span></div>
        <div class="mrow"><span class="mlabel">Grid Settings...</span></div>
        <div class="mrow off"><span class="mlabel">Crop mark/Default border</span></div>
        <div class="mrow"><span class="mlabel">Crop mark/Default border settings...</span></div>
        <div class="mrow checked"><span class="mlabel">Paper(Y)</span></div>
        <div class="mrow"><span class="mlabel">Show Tone Area(J)</span><span class="marrow"></span></div>
        <div class="msep"></div>
        <div class="mrow off"><span class="mlabel">Show playback fps</span></div>
        <div class="msep"></div>
        <div class="mrow"><span class="mlabel">Snap to Ruler</span><span class="mkey">Ctrl+1</span></div>
        <div class="mrow"><span class="mlabel">Snap to Special Ruler</span><span class="mkey">Ctrl+2</span></div>
        <div class="mrow"><span class="mlabel">Snap to Grid</span><span class="mkey">Ctrl+3</span></div>
        <div class="mrow"><span class="mlabel">Change Special Ruler Snap</span><span class="mkey">Ctrl+4</span></div>
        <div class="msep"></div>
        <div class="mrow"><span class="mlabel">Color profile(Q)</span><span class="marrow"></span></div>
    </div>

    <!-- annotations painted on the screenshot -->
    <div class="snapnote">All Snaps are OFF!?</div>
    <div class="redbox"></div>
</div>
</body>
</html>
```

FILE: styles.css
```css
html, body {
    margin: 0;
    padding: 0;
}
body {
    background: #444;
    font-family: "Open Sans", "Liberation Sans", sans-serif;
    font-size: 8.85px;
    color: #d2d2d2;
}
* {
    box-sizing: border-box;
}
svg {
    display: block;
}
.sprite {
    position: absolute;
    width: 0;
    height: 0;
}
.app {
    position: relative;
    width: 960px;
    height: 608px;
    overflow: hidden;
    background: #5a5b5d;
}

/* title + menu */
.titlebar {
    height: 21px;
    display: grid;
    grid-template-columns: 1fr auto 1fr;
    align-items: center;
    background: linear-gradient(#3f3f3f, #5c5c5c);
    border-top: 1px solid #555;
}
.title {
    white-space: pre;
    color: #c5c5c5;
    font-size: 8.97px;
}
.winbtns {
    display: flex;
    justify-content: flex-end;
    gap: 2px;
    padding-right: 1px;
    margin-top: -3px;
}
.winbtn {
    width: 14px;
    height: 14px;
    border-radius: 50%;
    background: #2f2f2f;
    color: #ddd;
    font-size: 11px;
    line-height: 14px;
    text-align: center;
    font-weight: bold;
}
.menubar {
    height: 21px;
    display: flex;
    padding-left: 1.2px;
    background: #757679;
    border-bottom: 1px solid #67686a;
}
.menuitem {
    padding: 0 5.8px;
    line-height: 20px;
    font-size: 8.8px;
}
.menuitem.open {
    background: linear-gradient(#6b8a9c, #749aae);
}
.workspace {
    display: flex;
    height: 566px;
}

/* shared dock bits */
.strip {
    height: 18px;
    display: flex;
    align-items: center;
    background: linear-gradient(#4a4a4a, #555);
    color: #bcbcbc;
    font-size: 11px;
}
.grip {
    width: 7px;
    height: 8px;
    margin: 0 3px 0 3px;
    background: repeating-linear-gradient(to right, #6e6e6e 0 1px, transparent 1px 2px);
}
.grip-left {
    margin-left: 26px;
}
.strip-right {
    justify-content: space-between;
    padding-right: 3px;
}
.chev {
    line-height: 18px;
}
.tabbar {
    height: 23px;
    display: flex;
    align-items: flex-end;
    background: linear-gradient(#4d4d4d, #5b5b5b);
    border-bottom: 1px solid #505050;
}
.hamicon {
    width: 12px;
    height: 10px;
    margin: 0 3px 5px 5px;
    flex: none;
}
.left-panels .hamicon {
    margin: 0 1px 5px 3px;
}
.tab {
    display: flex;
    align-items: center;
    height: 20px;
    padding: 0 3px;
    white-space: nowrap;
    font-size: 7px;
}
.tab-on {
    background: #76777a;
    color: #cfcfcf;
}
.tab-off {
    background: #606164;
    color: #8f8f90;
}
.tab-pen {
    width: 13px;
    background: #76777a;
    padding: 0;
}
.tabpen {
    width: 12px;
    height: 19px;
    flex: none;
}
.tabgear {
    width: 11px;
    height: 11px;
}
.tab-tool {
    width: 25px;
    padding: 0 1px;
}
.tab-sub {
    width: 75px;
    padding: 0 0 0 3px;
}
.tab-sub .tabpen {
    width: 10px;
}
.tab-sub .tabpen + .tabpen {
    margin-right: 1px;
}
.tabicon {
    width: 18px;
    height: 15px;
    flex: none;
}
.dockgroup {
    background: #707174;
    border: 1px solid #5f6062;
    border-radius: 2px;
}
.docktile {
    background: #77787b;
    border-bottom: 1px solid #636466;
}

/* left column */
.side-left {
    width: 223px;
    flex: none;
    background: #575859;
}
.left-body {
    display: flex;
    height: 548px;
}
.tools {
    width: 34px;
    flex: none;
    background: #5e5f61;
    position: relative;
}
.toolgroup {
    background: #737477;
    border-right: 1px solid #606163;
    border-bottom: 1px solid #5a5b5d;
    padding: 0 4px 0 5px;
    margin-bottom: 2px;
}
.group-a {
    height: 140px;
    padding-top: 1px;
}
.group-b {
    height: 184px;
}
.group-c {
    height: 197px;
}
.tool {
    height: 23px;
    display: flex;
    align-items: center;
    justify-content: center;
    width: 24px;
}
.tool svg {
    width: 19px;
    height: 19px;
}
.tool.active {
    background: #6a8698;
}
.tool-text {
    font-family: "Liberation Serif", serif;
    font-weight: bold;
    font-size: 18px;
    color: #222;
}
.fgmini {
    position: absolute;
    left: 2px;
    bottom: 0;
    width: 20px;
    height: 10px;
    background: #4b596b;
    border: 1px solid #6c8ba0;
}
.subtabs {
    width: 36px;
    flex: none;
    padding: 5px 1px 0 3px;
    display: flex;
    flex-direction: column;
    gap: 3px;
    background: linear-gradient(to right, #5e5e60, #525253);
}
.tile-tall {
    height: 28px;
    position: relative;
}
.tile-a {
    position: absolute;
    left: 3px;
    bottom: 2px;
    width: 14px;
    height: 14px;
}
.tile-gear {
    position: absolute;
    right: 2px;
    top: 2px;
    width: 12px;
    height: 12px;
}
.tile-tree {
    position: absolute;
    right: 1px;
    top: 3px;
    width: 13px;
    height: 21px;
}
.tile-color {
    height: 26px;
    display: flex;
    align-items: center;
    justify-content: center;
}
.minihue {
    display: block;
    flex: none;
    width: 22px;
    height: 22px;
    border-radius: 50%;
    background: radial-gradient(circle, #777 30%, transparent 32%), conic-gradient(from 290deg, #f00, #ff0, #0f0, #0ff, #00f, #f0f, #f00);
}
.minihue.small {
    width: 15px;
    height: 15px;
    margin: 0 4px;
}
.tile-pen {
    height: 30px;
    display: flex;
    align-items: center;
    justify-content: center;
    gap: 2px;
}
.tile-penicon {
    width: 14px;
    height: 24px;
}
.penDots {
    width: 5px;
    height: 19px;
    background: radial-gradient(circle 2.5px at 50% 3px, #333 95%, transparent), radial-gradient(circle 2.5px at 50% 10px, #333 95%, transparent), radial-gradient(circle 2.5px at 50% 16px, #333 95%, transparent);
}
.tile-big {
    width: 24px;
    height: 24px;
}
.tile-slider {
    height: 32px;
    display: flex;
    align-items: center;
    justify-content: center;
}
.left-panels {
    width: 153px;
    flex: none;
    border-left: 1px solid #606163;
}
.sublist {
    height: 366px;
    background: #707174;
    padding: 1px 0 0 2px;
}
.subrow {
    height: 32px;
    display: flex;
    flex-direction: column;
    border-bottom: 1px solid #5f6062;
    color: #c4c4c4;
    padding-top: 3px;
}
.subrow.first {
    height: 23px;
    flex-direction: row;
    align-items: center;
    gap: 3px;
    padding-top: 0;
    color: #d8d8d8;
}
.subrow.selected {
    background: linear-gradient(#86a2b3, #6f8d9f);
}
.subicon {
    width: 15px;
    height: 15px;
    margin-left: 3px;
    flex: none;
}
.sublabel {
    text-align: right;
    padding-right: 3px;
    white-space: nowrap;
    margin-top: -1px;
    line-height: 14px;
}
.colorpanel {
    position: relative;
    height: 141px;
    background: #76777a;
    padding: 6px 0 0 15px;
}
.tabbar-color {
    height: 18px;
}
.tab-wheel {
    height: 16px;
    padding: 0;
    width: 64px;
}
.wheel {
    position: relative;
    width: 120px;
    height: 120px;
    border-radius: 50%;
    padding: 10px;
    background: conic-gradient(from 290deg, #f00, #ff0, #0f0, #0ff, #00f, #f0f, #f00);
    box-shadow: 0 0 0 1px #4a4a4a;
}
.wheelhole {
    width: 100px;
    height: 100px;
    border-radius: 50%;
    background: #76777a;
    box-shadow: 0 0 0 1px #4a4a4a;
    display: flex;
    align-items: center;
    justify-content: center;
}
.svsquare {
    position: relative;
    width: 63px;
    height: 63px;
    border: 1px solid #3e3e3e;
    background: linear-gradient(to top, #000, rgba(0, 0, 0, 0)), linear-gradient(to right, #fff, #0f57ff);
}
.svcursor {
    position: absolute;
    left: 12px;
    top: 32px;
    width: 9px;
    height: 9px;
    border-radius: 50%;
    border: 1px solid #ddd;
}
.huehandle {
    position: absolute;
    left: 74px;
    top: 105px;
    width: 8px;
    height: 11px;
    background: #1e6de0;
    border: 1px solid #eee;
    outline: 1px solid #333;
    transform: rotate(18deg);
}
.swatch-bg {
    position: absolute;
    left: 10px;
    top: 110px;
    width: 17px;
    height: 17px;
    background: #f2f0f0;
}
.swatch-fg {
    position: absolute;
    left: 0;
    top: 100px;
    width: 18px;
    height: 18px;
    background: #4b596b;
    border: 1px solid #6c8ba0;
}
.swatch-clear {
    position: absolute;
    left: 0;
    top: 128px;
    width: 27px;
    height: 9px;
    background: repeating-conic-gradient(#eee 0 25%, #888 0 50%) 0 0 / 4px 4px;
}
.hsvrow {
    position: absolute;
    left: 36px;
    top: 125px;
    display: flex;
    align-items: center;
    color: #d0d0d0;
    font-size: 9.5px;
}
.hsvtag {
    width: 8px;
    height: 8px;
    background: #1f2a38;
    color: #ddd;
    font-size: 7px;
    line-height: 8px;
    text-align: center;
    font-weight: bold;
}
.hsvval {
    width: 21px;
    text-align: center;
}
.minihue.playhue {
    position: absolute;
    left: 130px;
    top: 118px;
    width: 16px;
    height: 16px;
}

/* middle */
.center {
    width: 539px;
    flex: none;
    display: flex;
    flex-direction: column;
    background: #444;
}
.toolbar {
    height: 28px;
    display: flex;
    align-items: center;
    padding-left: 189px;
    background: #6f7073;
    border-top: 1px solid #7b7c7f;
}
.cmd {
    width: 25px;
    height: 24px;
    display: flex;
    align-items: center;
    justify-content: center;
}
.cmd svg {
    width: 18px;
    height: 18px;
}
.cmd svg.cmd-l {
    width: 22px;
    height: 22px;
}
.cmdsep {
    width: 6px;
}
.cmdsep.wide {
    width: 8px;
}
.cmdmore {
    margin-left: 6px;
}
.morebtn {
    width: 19px;
    display: flex;
    align-items: center;
    justify-content: center;
    background: #77787b;
    border: 1px solid #666;
    border-radius: 2px;
}
.morebtn.big {
    height: 28px;
}
.morebtn.small {
    height: 15px;
    margin-left: 518px;
}
.morebtn svg {
    width: 13px;
    height: 7px;
}
.darkgap {
    height: 18px;
    background: #444;
}
.hruler {
    height: 12px;
    display: flex;
    padding-left: 188.4px;
    overflow: hidden;
    background: #fff repeating-linear-gradient(to right, #999 0 1px, transparent 1px 2.26px) 0 100% / 100% 2px no-repeat;
}
.hruler span {
    width: 22.6px;
    flex: none;
    border-left: 1px solid #999;
    padding-left: 2px;
    font-size: 7.5px;
    line-height: 10px;
    color: #8a8a8a;
}
.canvasrow {
    flex: 1;
    display: flex;
    min-height: 0;
}
.vruler {
    width: 13px;
    flex: none;
    display: flex;
    flex-direction: column;
    justify-content: flex-end;
    background: #fff;
    overflow: hidden;
    border-right: 1px solid #bbb;
}
.vruler span {
    height: 22.6px;
    flex: none;
    writing-mode: vertical-rl;
    transform: rotate(180deg);
    font-size: 8px;
    line-height: 11px;
    color: #8a8a8a;
    text-align: left;
    border-bottom: 1px solid #999;
}
.canvasview {
    position: relative;
    flex: 1;
    background: #444;
    overflow: hidden;
    border-right: 1px solid #777;
}
.paper {
    position: absolute;
    left: 0;
    right: 0;
    top: 45px;
    bottom: 0;
    background: #fff;
}
.guides {
    position: absolute;
    left: 0;
    top: 0;
    width: 525px;
    height: 484px;
}
.guide,
.guide path {
    stroke: #ff33ff;
    stroke-opacity: 0.2;
    stroke-width: 1;
    fill: none;
}
.guidedot {
    fill: #ff80ff;
}
.timeline {
    height: 24px;
    flex: none;
    background: linear-gradient(#555, #3f3f3f);
    border-top: 1px solid #777;
    align-items: flex-end;
}
.timeline .hamicon {
    margin: 0 2px 5px 3px;
}
.tab-time {
    height: 18px;
    width: 53px;
    margin-bottom: 3px;
    padding: 0 0 0 7px;
    gap: 5px;
}
.filmicon {
    width: 12px;
    height: 10px;
}

/* right column */
.side-right {
    width: 198px;
    flex: none;
    background: linear-gradient(to right, #5a5a5c, #4c4c4d);
}
.right-body {
    display: flex;
    height: 548px;
}
.right-panels {
    width: 163px;
    flex: none;
    background: #707174;
}
.right-panels > .tabbar {
    height: 22px;
}
.tab-nav {
    width: 57px;
    height: 19px;
    color: #d8d8d8;
}
.tab-prop {
    width: 70px;
    height: 18px;
    margin-left: 1px;
    gap: 4px;
}
.tab-layer {
    width: 43px;
    height: 19px;
}
.navview {
    position: relative;
    height: 158px;
    padding: 23px 5px 0;
    background: #444;
    border-top: 3px solid #707174;
}
.navpaper {
    height: 108px;
    background: #fff;
    border: 1px solid #999;
}
.navframe {
    position: absolute;
    left: 21px;
    top: 13px;
    width: 120px;
    height: 111px;
    border: 1px solid rgba(255, 0, 0, 0.5);
}
.navcontrols {
    height: 40px;
    padding-top: 4px;
    background: #707174;
}
.navrow {
    height: 19px;
    display: flex;
    align-items: center;
    padding-left: 8px;
    color: #d0d0d0;
}
.navval {
    width: 28px;
    flex: none;
    text-align: right;
    margin-right: 3.5px;
    font-size: 8.5px;
}
.navbtn {
    width: 17px;
    height: 17px;
    margin-right: 8px;
    flex: none;
}
.blendrow {
    height: 26px;
    display: flex;
    align-items: center;
    padding-left: 1px;
    background: #707174;
}
.blendselect {
    width: 80px;
    height: 20px;
    flex: none;
    display: flex;
    align-items: center;
    justify-content: space-between;
    padding: 0 3px 0 19px;
    background: #686a6d;
    border: 1px solid #606163;
    border-radius: 2px;
    font-size: 8.8px;
}
.blendarrow {
    width: 11px;
    height: 6px;
}
.opacitybar {
    width: 47px;
    height: 7px;
    flex: none;
    margin-left: 5px;
    background: linear-gradient(to right, rgba(222, 222, 222, 0), #dedede), repeating-conic-gradient(#ddd 0 25%, #a0a0a0 0 50%) 0 0 / 4px 4px;
    border-right: 3px solid #555;
}
.opacityval {
    width: 18px;
    flex: none;
    text-align: center;
    margin-left: 4px;
    font-size: 8.8px;
}
.spin {
    width: 3px;
    height: 7px;
    flex: none;
    margin-left: 2px;
    border-top: 2px solid #ccc;
    border-bottom: 2px solid #ccc;
}
.layericons {
    height: 24px;
    display: grid;
    grid-template-columns: repeat(6, 25px);
    padding-left: 13px;
    align-items: center;
    background: #707174;
}
.first-icons {
    height: 21px;
    padding-left: 5px;
    grid-template-columns: 25px 25px 25px 25px 28px 28px;
}
.licon {
    height: 21px;
    display: flex;
    align-items: center;
    justify-content: center;
    position: relative;
}
.licon svg {
    width: 19px;
    height: 19px;
}
.licon.boxed {
    background: #636467;
    border: 1px solid #6b6c6f;
}
.licon .boxarrow {
    position: absolute;
    right: 1px;
    top: 8px;
    width: 8px;
    height: 5px;
}
.layerlist {
    height: 232px;
    padding: 3.5px 5px 0 1px;
    border-top: 1px solid #5f6062;
    background: #707174;
}
.layer {
    height: 23.4px;
    display: flex;
    align-items: center;
    border-bottom: 1px solid #5f6062;
}
.lcol {
    width: 20px;
    height: 100%;
    display: flex;
    align-items: center;
    justify-content: center;
    border-right: 1px solid #636467;
    flex: none;
}
.eye {
    width: 11px;
    height: 7px;
}
.lpen {
    width: 13px;
    height: 13px;
}
.lmain {
    flex: 1;
    height: 100%;
    display: flex;
    align-items: center;
    padding-left: 2px;
    min-width: 0;
}
.lmain.selected {
    background: #6a8a9c;
}
.thumb {
    width: 23px;
    height: 16px;
    flex: none;
    border: 1px solid #555;
    background: repeating-conic-gradient(#eee 0 25%, #bdbdbd 0 50%) 0 0 / 5px 5px;
}
.thumb-on {
    border-color: #222;
}
.thumb-white {
    background: #fff;
}
.lcheck {
    width: 9px;
    height: 9px;
    margin: 0 5px;
    flex: none;
}
.lruler {
    width: 18px;
    height: 18px;
    flex: none;
}
.lpaper {
    width: 17px;
    height: 17px;
    margin: -4px 0 0 2px;
    flex: none;
}
.ltext {
    display: flex;
    flex-direction: column;
    line-height: 10.5px;
    white-space: nowrap;
    font-size: 8px;
    padding-left: 1px;
}
.ltext .tiny {
    font-size: 6.1px;
    color: #b8b8b8;
}
.ltext-low {
    margin-top: 8px;
}
.right-tabs {
    width: 35px;
    flex: none;
    padding: 5px 5px 0 2px;
    display: flex;
    flex-direction: column;
    gap: 5px;
}
.right-tabs .dockgroup {
    display: flex;
    flex-direction: column;
    align-items: center;
}
.rticon {
    width: 22px;
    height: 22px;
    flex: none;
}
.rt-a {
    height: 87px;
    padding: 1px 0 3px;
    justify-content: space-around;
}
.rt-b {
    height: 86px;
    background: #606164;
}
.rt-b .docktile {
    width: 100%;
    height: 28.6px;
    display: flex;
    align-items: center;
    justify-content: center;
}
.rt-b .dim {
    background: #6a6b6e;
}
.rt-c {
    height: 33px;
    justify-content: center;
}

/* View menu */
.viewmenu {
    position: absolute;
    left: 190px;
    top: 42px;
    width: 226px;
    height: 495px;
    padding-top: 2px;
    background: linear-gradient(to right, #6f7073 0 27px, #5f6062 27px 28px, #75767a 28px);
    border-right: 1px solid #5b5c5e;
    border-bottom: 1px solid #5b5c5e;
    border-left: 1px solid #5b5c5e;
    box-shadow: 1px 1px 1px rgba(0, 0, 0, 0.25);
    z-index: 5;
}
.mrow {
    position: relative;
    height: 18.2px;
    display: flex;
    align-items: center;
    padding-left: 30px;
    color: #d4d4d4;
    font-size: 8.85px;
}
.mrow.off {
    color: #8e8f92;
}
.mkey {
    position: absolute;
    right: 31px;
}
.marrow {
    position: absolute;
    right: 6px;
    width: 0;
    height: 0;
    border-left: 5px solid #f2f2f2;
    border-top: 4px solid transparent;
    border-bottom: 4px solid transparent;
}
.mrow.checked::before {
    content: "\2713";
    position: absolute;
    left: 9px;
    font-size: 11px;
    font-family: "DejaVu Sans", sans-serif;
    color: #f2f2f2;
}
.msep {
    height: 3.8px;
    margin-left: 28px;
    border-bottom: 1px solid #67686b;
}

/* annotations */
.snapnote {
    position: absolute;
    left: 744px;
    top: 22px;
    font-size: 12.6px;
    line-height: 18px;
    color: #41e50f;
    text-decoration: underline;
    z-index: 6;
}
.redbox {
    position: absolute;
    left: 650px;
    top: 30px;
    width: 92px;
    height: 45px;
    border: 2px solid #f01010;
    z-index: 6;
}
```
